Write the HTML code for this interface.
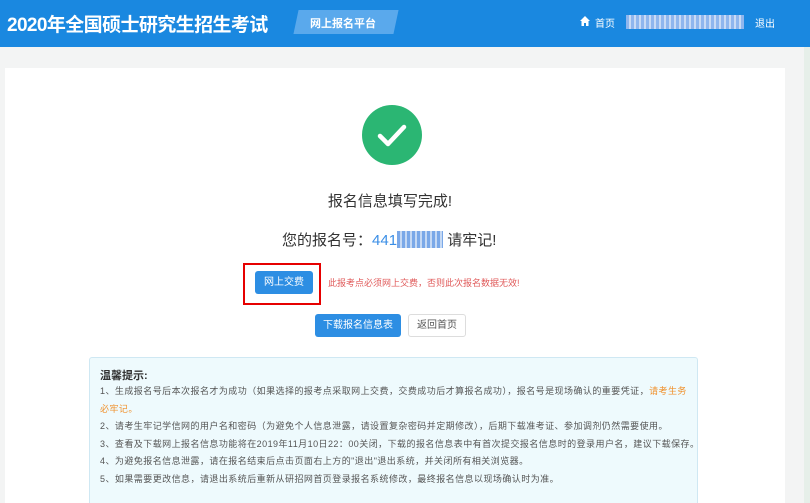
<!DOCTYPE html>
<html><head><meta charset="utf-8"><style>
*{margin:0;padding:0;box-sizing:border-box}
html,body{width:810px;height:503px;overflow:hidden}
body{background:#f3f4f4;font-family:"Liberation Sans","Noto Sans CJK SC",sans-serif;position:relative}
.hd{position:absolute;left:0;top:0;width:810px;height:47px;background:#1a88e0}
.t{position:absolute;left:7px;top:10px;color:#fff;font-size:19px;font-weight:bold;letter-spacing:-0.6px}
.tag{position:absolute;left:296px;top:10px;width:100px;height:24px;background:#5aa9ec;transform:skewX(-12deg)}
.tagt{position:absolute;left:310px;top:15px;color:#fff;font-size:11px;font-weight:bold}
.nav{position:absolute;top:15px;color:#fff;font-size:10px}
.mask{position:absolute;left:626px;top:15px;width:118px;height:14px;background:repeating-linear-gradient(90deg,#8fb6ee 0 3px,#c9dbf5 3px 5px)}
.card{position:absolute;left:5px;top:68px;width:780px;height:440px;background:#fff}
.sb{position:absolute;left:804px;top:47px;width:6px;height:456px;background:#e6efe9}
.ck{position:absolute;left:362px;top:105px;width:60px;height:60px;border-radius:50%;background:#2bb673}
.c{position:absolute;left:0;width:810px;text-align:center;color:#333}
.btn{position:absolute;background:#2d8ee3;color:#fff;font-size:10px;text-align:center;border-radius:3px}
.tip{position:absolute;left:89px;top:357px;width:609px;height:160px;background:#eefafd;border:1px solid #cfe8f3;border-radius:3px;padding:11px 0 0 10px;font-size:9px;letter-spacing:0.45px;color:#555;line-height:17.5px;white-space:nowrap}
</style></head><body>
<div class="hd">
<div class="t">2020年全国硕士研究生招生考试</div>
<div class="tag"></div><div class="tagt">网上报名平台</div>
<svg style="position:absolute;left:579px;top:15px" width="12" height="12" viewBox="0 0 12 12"><path d="M1 6L6 1L11 6H9.5V11H7V8H5V11H2.5V6Z" fill="#fff"/></svg>
<div class="nav" style="left:595px">首页</div>
<div class="mask"></div>
<div class="nav" style="left:755px">退出</div>
</div>
<div class="sb"></div>
<div class="card"></div>
<div class="ck"><svg width="60" height="60" viewBox="0 0 60 60"><path d="M18 31L26 39L42 22" fill="none" stroke="#fff" stroke-width="4.5" stroke-linecap="round" stroke-linejoin="round"/></svg></div>
<div class="c" style="top:190px;font-size:15px;left:-15px">报名信息填写完成!</div>
<div style="position:absolute;left:282px;top:229px;font-size:15px;color:#333">您的报名号：<span style="color:#3a8ee6">441</span><span style="display:inline-block;width:46px;height:17px;vertical-align:-3px;background:repeating-linear-gradient(90deg,#7aa8e8 0 3px,#c5d9f4 3px 5px)"></span> 请牢记!</div>
<div style="position:absolute;left:243px;top:263px;width:78px;height:42px;border:2px solid #e60000"></div>
<div class="btn" style="left:255px;top:271px;width:58px;height:23px;line-height:23px">网上交费</div>
<div style="position:absolute;left:328px;top:276px;font-size:9px;color:#e05a5a">此报考点必须网上交费，否则此次报名数据无效!</div>
<div class="btn" style="left:315px;top:314px;width:86px;height:23px;line-height:23px">下载报名信息表</div>
<div style="position:absolute;left:408px;top:314px;width:58px;height:23px;line-height:21px;border:1px solid #ddd;border-radius:3px;font-size:10px;color:#555;text-align:center">返回首页</div>
<div class="tip">
<div style="font-size:11px;font-weight:bold;color:#333;line-height:14px;letter-spacing:0">温馨提示:</div>
<div>1、生成报名号后本次报名才为成功（如果选择的报考点采取网上交费，交费成功后才算报名成功），报名号是现场确认的重要凭证，<span style="color:#f0902a">请考生务</span></div>
<div style="color:#f0902a">必牢记。</div>
<div>2、请考生牢记学信网的用户名和密码（为避免个人信息泄露，请设置复杂密码并定期修改），后期下载准考证、参加调剂仍然需要使用。</div>
<div>3、查看及下载网上报名信息功能将在2019年11月10日22：00关闭，下载的报名信息表中有首次提交报名信息时的登录用户名，建议下载保存。</div>
<div>4、为避免报名信息泄露，请在报名结束后点击页面右上方的"退出"退出系统，并关闭所有相关浏览器。</div>
<div>5、如果需要更改信息，请退出系统后重新从研招网首页登录报名系统修改，最终报名信息以现场确认时为准。</div>
</div>
</body></html>
